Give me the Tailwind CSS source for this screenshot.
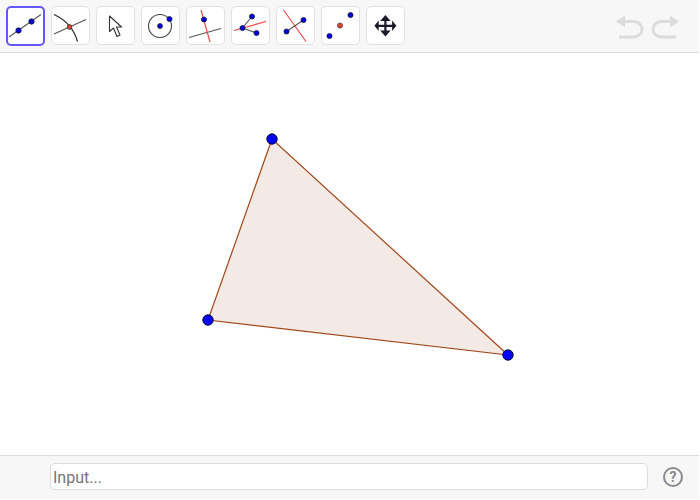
<!DOCTYPE html>
<html lang="en">
<head>
  <meta charset="UTF-8" />
  <title>Triangle</title>
  <script src="https://cdn.jsdelivr.net/npm/@tailwindcss/browser@4"></script>
</head>
<body class="bg-white w-[700px] h-[500px] overflow-hidden font-['Roboto',sans-serif]">
  <div class="w-[699px] h-[499px] flex flex-col">
    <!-- toolbar -->
    <div class="h-[53px] shrink-0 bg-[#f7f7f7] border-b border-[#dcdcdc] flex items-start pl-[6px] pt-[6px] gap-[6px]">
      <button class="w-[39px] h-[40px] rounded-[5px] bg-white border-2 border-[#6557ff] flex items-center justify-center">
        <svg class="shrink-0" width="35" height="36" viewBox="8 8 35 36">
          <line x1="9" y1="37" x2="41" y2="14.5" stroke="#555" stroke-width="1.1"/>
          <circle cx="18.5" cy="30.5" r="2.7" fill="#0000e0" stroke="#222" stroke-width=".8"/>
          <circle cx="31.5" cy="21.5" r="2.7" fill="#0000e0" stroke="#222" stroke-width=".8"/>
        </svg>
      </button>
      <button class="w-[39px] h-[39px] rounded-[5px] bg-white border border-[#e2e2e2] flex items-center justify-center">
        <svg class="shrink-0" width="37" height="37" viewBox="52 7 37 37">
          <line x1="54" y1="34" x2="86" y2="19.5" stroke="#555" stroke-width="1.1"/>
          <path d="M54 14.5C66 20 74 29 77.5 41.5" fill="none" stroke="#222" stroke-width="1.1"/>
          <circle cx="69.5" cy="27" r="2.4" fill="#e0432a" stroke="#333" stroke-width=".8"/>
        </svg>
      </button>
      <button class="w-[39px] h-[39px] rounded-[5px] bg-white border border-[#e2e2e2] flex items-center justify-center">
        <svg class="shrink-0" width="37" height="37" viewBox="97 7 37 37">
          <path d="M109.5 16V31.5L113.5 28L117 36.5L120 35L116.5 27H121.5Z" fill="#fff" stroke="#333" stroke-width="1.1" stroke-linejoin="round"/>
        </svg>
      </button>
      <button class="w-[39px] h-[39px] rounded-[5px] bg-white border border-[#e2e2e2] flex items-center justify-center">
        <svg class="shrink-0" width="37" height="37" viewBox="142 7 37 37">
          <circle cx="160" cy="26" r="11.5" fill="none" stroke="#444" stroke-width="1.1"/>
          <circle cx="160" cy="26" r="2.5" fill="#0000e0" stroke="#222" stroke-width=".7"/>
          <circle cx="169.5" cy="19" r="2.6" fill="#0000e0" stroke="#222" stroke-width=".7"/>
        </svg>
      </button>
      <button class="w-[39px] h-[39px] rounded-[5px] bg-white border border-[#e2e2e2] flex items-center justify-center">
        <svg class="shrink-0" width="37" height="37" viewBox="187 7 37 37">
          <line x1="189" y1="37.5" x2="221" y2="28.5" stroke="#555" stroke-width="1.1"/>
          <line x1="201" y1="10" x2="210" y2="42" stroke="#f04040" stroke-width="1.1"/>
          <circle cx="204" cy="19.5" r="2.6" fill="#0000e0" stroke="#222" stroke-width=".7"/>
        </svg>
      </button>
      <button class="w-[39px] h-[39px] rounded-[5px] bg-white border border-[#e2e2e2] flex items-center justify-center">
        <svg class="shrink-0" width="37" height="37" viewBox="232 7 37 37">
          <line x1="234" y1="30.5" x2="266" y2="21.5" stroke="#f04040" stroke-width="1.1"/>
          <path d="M252 16.5L242.5 28L256.5 33" fill="none" stroke="#555" stroke-width="1.1"/>
          <circle cx="252" cy="16.5" r="2.6" fill="#0000e0" stroke="#222" stroke-width=".7"/>
          <circle cx="242.5" cy="28" r="2.6" fill="#0000e0" stroke="#222" stroke-width=".7"/>
          <circle cx="256.5" cy="33" r="2.6" fill="#0000e0" stroke="#222" stroke-width=".7"/>
        </svg>
      </button>
      <button class="w-[39px] h-[39px] rounded-[5px] bg-white border border-[#e2e2e2] flex items-center justify-center">
        <svg class="shrink-0" width="37" height="37" viewBox="277 7 37 37">
          <line x1="283.5" y1="10" x2="306" y2="41.5" stroke="#f04040" stroke-width="1.1"/>
          <line x1="286.5" y1="31.5" x2="303.5" y2="20" stroke="#555" stroke-width="1.1"/>
          <circle cx="286.5" cy="31.5" r="2.6" fill="#0000e0" stroke="#222" stroke-width=".7"/>
          <circle cx="303.5" cy="20" r="2.6" fill="#0000e0" stroke="#222" stroke-width=".7"/>
        </svg>
      </button>
      <button class="w-[39px] h-[39px] rounded-[5px] bg-white border border-[#e2e2e2] flex items-center justify-center">
        <svg class="shrink-0" width="37" height="37" viewBox="322 7 37 37">
          <circle cx="329.5" cy="36" r="2.6" fill="#0000e0" stroke="#222" stroke-width=".7"/>
          <circle cx="340" cy="25.5" r="2.6" fill="#e0432a" stroke="#444" stroke-width=".7"/>
          <circle cx="350.5" cy="15" r="2.6" fill="#0000e0" stroke="#222" stroke-width=".7"/>
        </svg>
      </button>
      <button class="w-[39px] h-[39px] rounded-[5px] bg-white border border-[#e2e2e2] flex items-center justify-center">
        <svg class="shrink-0" width="37" height="37" viewBox="367 7 37 37">
          <path d="M385.4 15L380.2 21H384.3V24.7H378.7V20.6L374.4 25.8L378.7 31V26.9H384.3V30.6H380.2L385.4 36.6L390.6 30.6H386.5V26.9H392.1V31L396.4 25.8L392.1 20.6V24.7H386.5V21H390.6Z" fill="#1a1a2a"/>
        </svg>
      </button>
      <div class="ml-auto mr-[20px] mt-[9px] flex gap-[5px]">
        <svg class="shrink-0" width="29" height="24" viewBox="0 0 29 24" fill="none">
          <path d="M3 6.5H17C29 6.5 29 22 17 22H3" stroke="#dcdcdc" stroke-width="2.8"/>
          <path d="M0 6.5L9 0.5V12.5Z" fill="#dcdcdc"/>
        </svg>
        <svg class="shrink-0" width="29" height="24" viewBox="0 0 29 24" fill="none">
          <path d="M26 6.5H12C0 6.5 0 22 12 22H26" stroke="#dcdcdc" stroke-width="2.8"/>
          <path d="M29 6.5L20 0.5V12.5Z" fill="#dcdcdc"/>
        </svg>
      </div>
    </div>

    <!-- graphics view -->
    <svg class="flex-1 block w-full" viewBox="0 53 699 402" preserveAspectRatio="none">
      <polygon points="272,139 208,320 508,355" fill="#f3eae5" stroke="#993300" stroke-width="1.2" stroke-opacity=".9"/>
      <circle cx="272" cy="139" r="5.2" fill="#0000ff" stroke="#0a0a30" stroke-width="1"/>
      <circle cx="208" cy="320" r="5.2" fill="#0000ff" stroke="#0a0a30" stroke-width="1"/>
      <circle cx="508" cy="355" r="5.2" fill="#0000ff" stroke="#0a0a30" stroke-width="1"/>
    </svg>

    <!-- input bar -->
    <div class="h-[44px] shrink-0 bg-[#f7f7f7] border-t border-[#dcdcdc] flex items-start pt-[7px] pl-[50px]">
      <input type="text" placeholder="Input..." class="w-[598px] h-[27px] bg-white border border-[#dcdcdc] rounded-[5px] pl-[2px] pr-[2px] pt-[1px] text-[16px] text-[#555] placeholder:text-[#757575] outline-none" />
      <div class="ml-[15px] mt-[4px] w-[20px] h-[20px] rounded-full border-2 border-[#8a8a8a] flex items-center justify-center text-[14px] font-bold leading-none text-[#8a8a8a]">?</div>
    </div>
  </div>
</body>
</html>
